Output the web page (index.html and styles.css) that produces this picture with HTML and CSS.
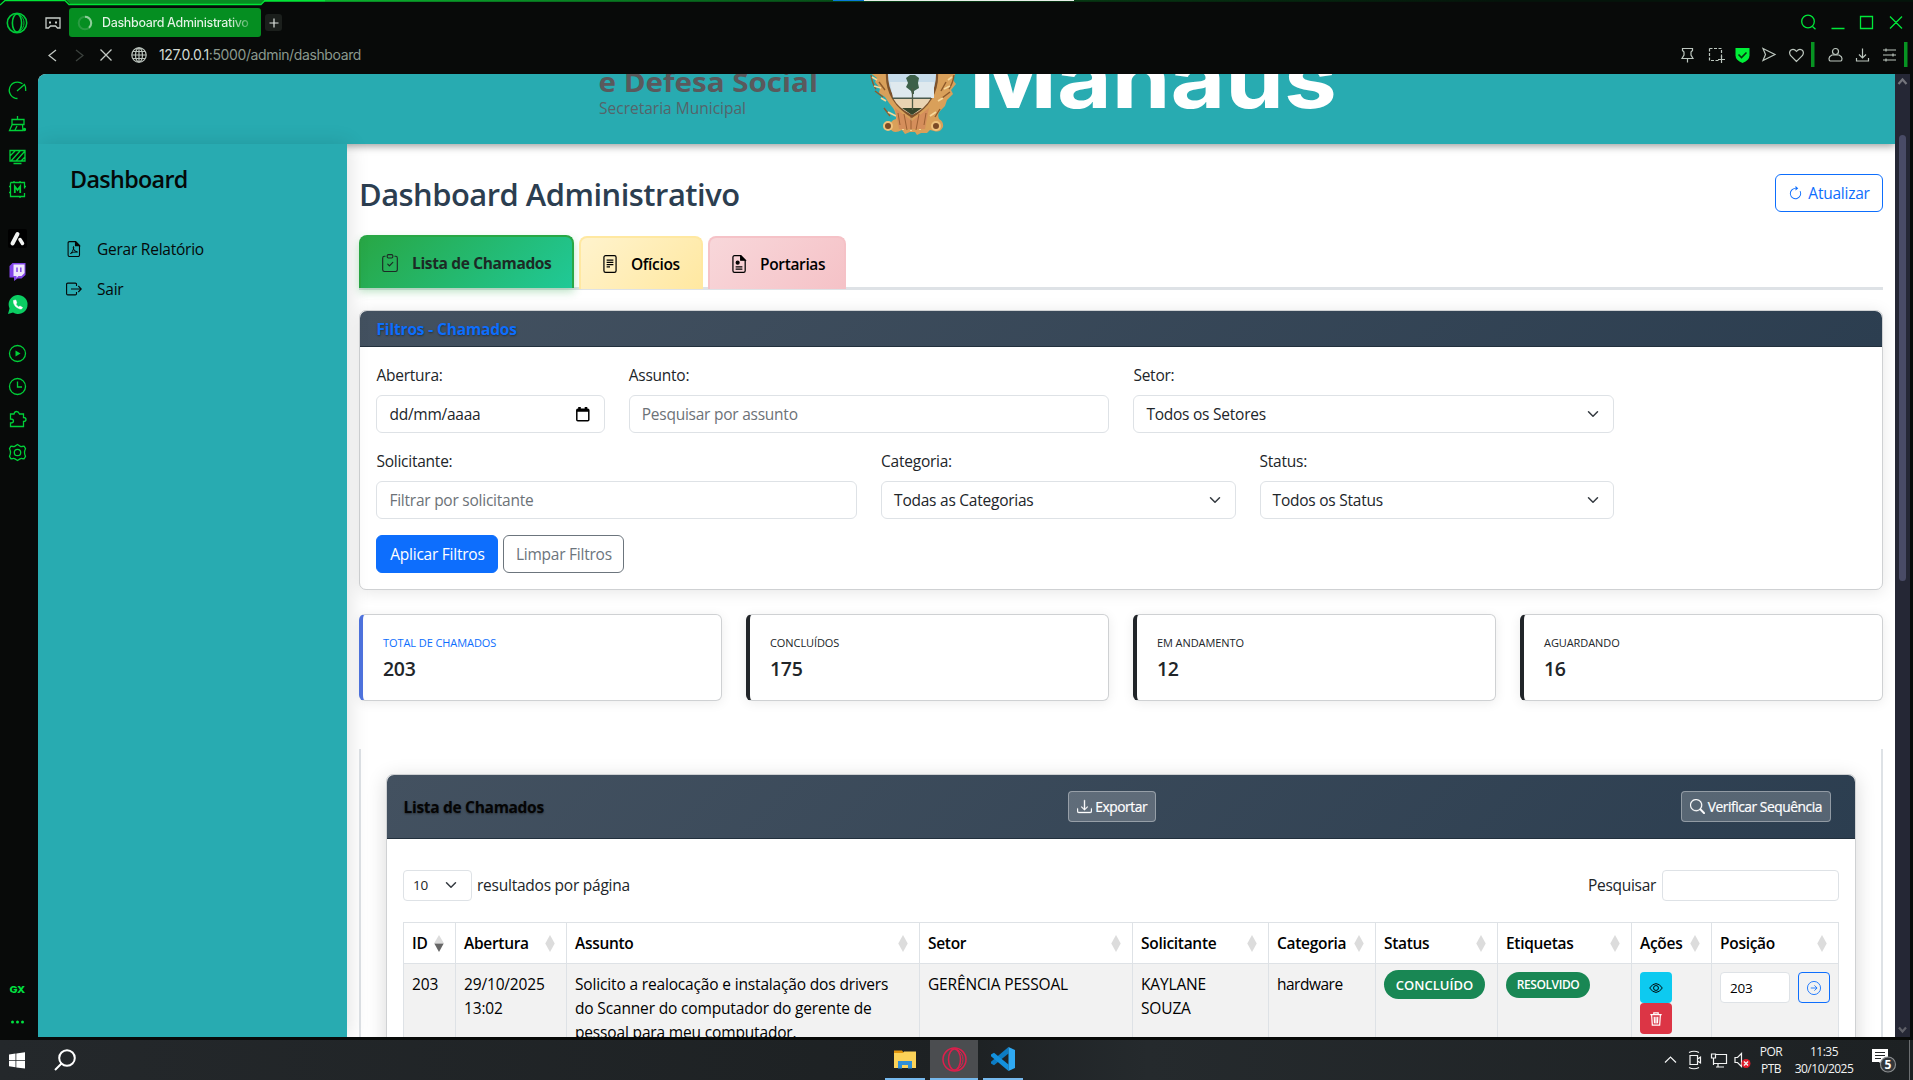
FILE: index.html
```html
<!DOCTYPE html>
<html lang="pt-BR">
<head>
<meta charset="utf-8">
<title>Dashboard Administrativo</title>
<link rel="stylesheet" href="styles.css">
</head>
<body>
<div class="screen">
  <header class="chrome">
    <svg class="topline" width="1913" height="8" viewBox="0 0 1913 8">
      <defs><linearGradient id="fade" x1="0" x2="1"><stop offset="0" stop-color="#0ac030"/><stop offset=".35" stop-color="#064d17"/><stop offset=".75" stop-color="#04140a"/></linearGradient></defs>
      <rect x="264" y="0" width="1649" height="1.800" fill="url(#fade)"/>
      <path d="M5 0h260l-4 4H70l-4-4z" fill="#078c22"/>
      <path d="M0 5l5-4.500h60l4 4h192l4-4h60" fill="none" stroke="#00e436" stroke-width="1.300"/>
      <path d="M833 0h31v1h-31z" fill="#0878d8"/><path d="M864 0h210v1H864z" fill="#e8efe9"/>
    </svg>
    <div class="tabbar">
      <svg class="opera" width="22" height="22" viewBox="0 0 22 22" fill="none" stroke="#00c838" stroke-width="1.600"><circle cx="11" cy="11" r="9.700"/><ellipse cx="11" cy="11" rx="4.600" ry="9"/><path d="M13 2.500q5 3 5 8.500t-5 8.500" stroke-width="1"/></svg>
      <svg class="pad" width="16" height="13" viewBox="0 0 16 13" fill="none" stroke="#c8cec9" stroke-width="1.300"><path d="M1 1h14v10h-2.500l-2-2h-5l-2 2H1z"/><path d="M4 5.500h2M10 5.500h2" stroke-width="2"/></svg>
      <div class="tab"><svg width="16" height="16" viewBox="0 0 16 16" fill="none" stroke-width="2"><circle cx="8" cy="8" r="6.300" stroke="#2a9c42"/><path d="M8 1.700a6.300 6.300 0 0 1 4 11" stroke="#8fce9b"/></svg><span class="tab-name">Dashboard Administrativo</span></div>
      <div class="newtab"><svg width="10" height="10" viewBox="0 0 10 10" stroke="#dfe4e0" stroke-width="1.200"><path d="M5 .5v9M.5 5h9"/></svg></div>
      <svg class="winbtns" width="104" height="20" viewBox="0 0 104 20" fill="none" stroke="#00e83a" stroke-width="1.300"><circle cx="8" cy="8.500" r="6.300"/><path d="M12.500 13.500l3 2.800M31.500 15.500h13M60.500 3.500h12v12h-12zM90 3.500l12 12m0-12l-12 12"/></svg>
    </div>
    <div class="addressbar">
      <svg width="9" height="13" viewBox="0 0 9 13" fill="none" stroke="#c3c9c4" stroke-width="1.300"><path d="M8 1L1 6.500 8 12"/></svg>
      <svg class="fwd" width="9" height="13" viewBox="0 0 9 13" fill="none" stroke="#3c423e" stroke-width="1.300"><path d="M1 1l7 5.500L1 12"/></svg>
      <svg class="stop" width="12" height="12" viewBox="0 0 12 12" stroke="#c3c9c4" stroke-width="1.300"><path d="M.5.5l11 11m0-11l-11 11"/></svg>
      <svg class="globe" width="16" height="16" viewBox="0 0 16 16" fill="none" stroke="#b9c2bb" stroke-width="1.200"><circle cx="8" cy="8" r="7.200"/><ellipse cx="8" cy="8" rx="3.500" ry="7.200"/><path d="M8 1v14M1 8h14M2 4.500h12M2 11.500h12"/></svg>
      <span class="url"><b>127.0.0.1</b>:5000/admin/dashboard</span>
      <svg class="tools" width="232" height="26" viewBox="0 0 232 26" fill="none" stroke="#bcc6be" stroke-width="1.200">
        <path d="M3.500 6.500h10v2l-1.500 1.500v3l2 3.500H3l2-3.500v-3L3.500 8.500zM8.500 16.500v4"/>
        <path d="M30.500 6.500h12v9M30.500 6.500v12h9" stroke-dasharray="3 1.500"/><path d="M42.500 14v7M39 17.500h7"/>
        <path d="M56.500 6h14v7.500q0 4.500-7 7.500-7-3-7-7.500z" fill="#00f038" stroke="none"/><path d="M59.500 12.500l3 3 5-5" stroke="#06340f" stroke-width="1.600"/>
        <path d="M84 6.500l12 6-12 6 2.500-6z"/>
        <path d="M117.500 19.500l-6-6q-2-3.500.5-5.500 3-1.500 5.500 1.300Q120 6.500 123 8q2.500 2 .5 5.500z"/>
        <path d="M132 0h3.500v25H132z" fill="#079322" stroke="none"/><path d="M225 0h3.500v25H225z" fill="#079322" stroke="none"/>
        <circle cx="156.500" cy="9.500" r="3"/><path d="M153 13h7q3 1.500 3 3.500t-1 2.500h-11q-1-.5-1-2.500t3-3.500z"/>
        <path d="M183.500 6.500v9M180 12.500l3.500 3.500 3.500-3.500M177.500 16v3h12v-3"/>
        <path d="M204 8h13M204 13h13M204 18h13M207 6.500v3M214 11.500v3M207 16.500v3"/>
      </svg>
    </div>
  </header>
  <div class="middle">
    <nav class="gx">
      <svg width="38" height="963" viewBox="0 74 38 963" fill="none" stroke="#00cf38" stroke-width="1.300">
        <path d="M17.500 98.500A8.200 8.200 0 1 1 22.500 83.800M17 91l7.500-6.500Q26.200 87 25.700 91"/>
        <path d="M17.500 116v3M12 119.500h12v5H12zM12 125l-2.500 5.500h13.500l-.5-5.500M15 130l2-4"/><circle cx="24.500" cy="129.500" r="1" fill="#00cf38"/>
        <path d="M10 150.500h15v10.500H10zM13.500 163.500h8M10 156l5-5M11 161l9-10M16 161l9-10M21 161l4-4"/>
        <path d="M10.500 182.500h14v6M24.500 193v3.500h-14v-14M9 186.500h1.500M9 192.500h1.500M14 181v1.500M20 181v1.500M20 196.500v1.500M24.500 186.500h1.500"/><path d="M14.800 193v-6.500l2.700 3.500 2.700-3.500v6.500" stroke-width="1.800"/>
        <rect x="8" y="229" width="19" height="19" rx="2" fill="#000" stroke="none"/>
        <path d="M12.500 243.500l5-9.500" stroke="#f2f4f2" stroke-width="4" stroke-linecap="round"/><path d="M20 239.500l2.500 4" stroke="#f2f4f2" stroke-width="3.500" stroke-linecap="round"/>
        <path d="M9.500 266l3-3h13v12l-4 3.500h-4l-3.500 2.500V277.500h-4.500z" fill="#8145e8" stroke="none"/><path d="M13.500 264.500h11v8.500l-3 3h-3l-2 2v-2h-3z" fill="#eee8fb" stroke="none"/><path d="M17 267.500v4.500M20.800 267.500v4.500" stroke="#8145e8" stroke-width="1.500"/>
        <path d="M8 314l1.500-5.500a9.500 9.500 0 1 1 3.500 4z" fill="#0bcd62" stroke="none"/><path d="M13.500 300.500q-.5 6 6.500 8.500 2 .5 2.500-1.500l-2.500-1.500-1.300 1Q16.300 305.500 15.800 304l1-1-1-3z" fill="#fff" stroke="#fff" stroke-width=".6"/>
        <circle cx="17.500" cy="353.500" r="8"/><path d="M15.500 350.500l5 3-5 3z" fill="#00cf38" stroke="none"/>
        <circle cx="17.500" cy="386.500" r="8"/><path d="M17.500 381.500v5.500h4.500"/>
        <path d="M10.500 414h3.500q.5-2.500 2.500-2.500T19.500 414h4v3.500q2.500 0 2.500 2t-2.500 2v5h-13v-3.500q3 0 3-2t-3-2z"/>
        <path d="M17.500 444.500l2.500 1.600q1 .6 2 .4l2-.3 1.500 2.500q-1 2-1 3.800t1 3.800l-1.500 2.500-2-.3q-1-.2-2 .4l-2.500 1.600-2.500-1.600q-1-.6-2-.4l-2 .3-1.500-2.500q1-2 1-3.800t-1-3.800l1.500-2.500 2 .3q1 .2 2-.4z" stroke-linejoin="round"/><circle cx="17.500" cy="452.500" r="3.200"/>
        <g fill="#00e040" stroke="none"><circle cx="12.500" cy="1022" r="1.500"/><circle cx="17.500" cy="1022" r="1.500"/><circle cx="22.500" cy="1022" r="1.500"/></g>
        <text x="9.500" y="993" class="gxlabel" textLength="15.500" lengthAdjust="spacingAndGlyphs">GX</text>
      </svg>
    </nav>
    <div class="page">
      <div class="banner">
        <svg width="1857" height="70" viewBox="38 74 1857 70">
          <text class="org" x="598.500" y="91.500" textLength="219.500" lengthAdjust="spacingAndGlyphs">e Defesa Social</text>
          <text class="sec" x="599" y="113.500" textLength="147" lengthAdjust="spacingAndGlyphs">Secretaria Municipal</text>
          <text class="city" x="969" y="108" textLength="368" lengthAdjust="spacingAndGlyphs">Manaus</text>
          <g>
            <path d="M869 72h87l-3 8 3 4-5 6 2 4-6 6-2 6-5 5q-3 3-1 8 5 3 4 8-3 6-9 4l-4-1-3 3h-6l-4 2-2-3h-5l-5 2-3-4q-9 5-12-2-1-7 6-9 0-7-3-11l-4-5-4-6-6-4 1-5-5-6 2-4z" fill="#d9a05a"/>
            <path d="M871 75q1 8 5 14M875 91l8 6M954 75q-1 8-5 14M950 92l-8 6M884 108l6 8M940 109l-5 8M879 82l6 8M946 82l-5 9" fill="none" stroke="#8d5a2b" stroke-width="1.400"/>
            <path d="M872 77l5 3M874 86l7 2M881 98l5 3M888 112l8 4M952 77l-4 3M950 86l-6 3M943 98l-5 3M936 112l-6 4M903 120v10M911 118v13M920 120v10" fill="none" stroke="#f6d79a" stroke-width="1.800"/>
            <path d="M895 108l17 13 17-13-4 21h-26z" fill="#d58e5b"/>
            <path d="M904 114l3 16M911 117v13M919 114l-3 16M898 113l2 12M926 113l-2 12" stroke="#9c6033" stroke-width="1"/>
            <circle cx="888" cy="126" r="4" fill="#7a4a26" stroke="#efc27c" stroke-width="2"/><circle cx="936" cy="126" r="4" fill="#7a4a26" stroke="#efc27c" stroke-width="2"/>
            <path d="M886 72h52q2 29-26 46Q884 101 886 72z" fill="#7d522c"/>
            <path d="M888 72h48q1 27-24 43-25-16-24-43z" fill="#c5dbea"/>
            <path d="M890 82h44v16h-41z" fill="#dfe9ee"/>
            <path d="M893 98h38q-6 11-19 17-14-7-19-17z" fill="#e9d3b2"/>
            <path d="M892 97.500h39v1.500h-38z" fill="#4a5a4c"/>
            <path d="M902 108h20l-10 7z" fill="#36452b"/>
            <path d="M906 78l4-3 5 0 4 3-1 5 1 5-5 3 0 3h-2l-1-3-5-4 2-4z" fill="#3c6049"/><path d="M912.500 88v22" stroke="#4d5a45" stroke-width="1.300"/>
          </g>
        </svg>
      </div>
      <div class="columns">
        <aside class="side">
          <div class="side-title">Dashboard</div>
          <a class="side-link"><svg width="16" height="16" viewBox="0 0 16 16" fill="none" stroke="currentColor" stroke-width="1.100"><path d="M3.500.600h6L13.500 4.600v9.500q0 1.400-1.400 1.400H3.500q-1.400 0-1.400-1.400V2Q2.100.600 3.500.600z"/><path d="M9.500.600v4h4z" fill="currentColor"/><path d="M4.500 12.500q2-1.500 3-4.500.5-2.500 0-2.500t0 2.500q1 2.500 4 3-4-.5-7 1.500z" stroke-width="1"/></svg><span>Gerar Relatório</span></a>
          <a class="side-link"><svg width="16" height="16" viewBox="0 0 16 16" fill="none" stroke="currentColor" stroke-width="1.100"><path d="M10.500 5V3.300q0-1.200-1.200-1.200H1.800Q.6 2.100.6 3.300v9.400q0 1.200 1.200 1.200h7.500q1.200 0 1.200-1.200V11M5 8h10.300M12.300 5l3 3-3 3"/></svg><span>Sair</span></a>
        </aside>
        <main class="main">
          <div class="title-row">
            <h1>Dashboard Administrativo</h1>
            <a class="btn refresh"><svg width="15" height="15" viewBox="0 0 16 16" fill="currentColor"><path d="M8 3a5 5 0 1 0 4.546 2.914.5.5 0 0 1 .908-.417A6 6 0 1 1 8 2z"/><path d="M8 4.466V.534a.25.25 0 0 1 .41-.192l2.360 1.966c.12.1.12.284 0 .384L8.410 4.658A.25.25 0 0 1 8 4.466"/></svg><span>Atualizar</span></a>
          </div>
          <div class="tabs">
            <a class="nav-tab green"><svg width="18" height="18" viewBox="0 0 16 16" fill="currentColor"><path d="M10.854 7.146a.5.5 0 0 1 0 .708l-3 3a.5.5 0 0 1-.708 0l-1.500-1.500a.5.5 0 1 1 .708-.708L7.500 9.793l2.646-2.647a.5.5 0 0 1 .708 0"/><path d="M4 1.500H3a2 2 0 0 0-2 2V14a2 2 0 0 0 2 2h10a2 2 0 0 0 2-2V3.500a2 2 0 0 0-2-2h-1v1h1a1 1 0 0 1 1 1V14a1 1 0 0 1-1 1H3a1 1 0 0 1-1-1V3.500a1 1 0 0 1 1-1h1z"/><path d="M9.500 1a.5.5 0 0 1 .5.5v1a.5.5 0 0 1-.5.5h-3a.5.5 0 0 1-.5-.5v-1a.5.5 0 0 1 .5-.5zm-3-1A1.500 1.500 0 0 0 5 1.500v1A1.500 1.500 0 0 0 6.500 4h3A1.500 1.500 0 0 0 11 2.500v-1A1.500 1.500 0 0 0 9.500 0z"/></svg><span>Lista de Chamados</span></a>
            <a class="nav-tab yellow"><svg width="18" height="18" viewBox="0 0 16 16" fill="none" stroke="currentColor" stroke-width="1.100"><rect x="2.600" y=".600" width="10.800" height="14.800" rx="1.500"/><path d="M5 4.500h6M5 6.500h6M5 8.500h6M5 10.500h3"/></svg><span>Ofícios</span></a>
            <a class="nav-tab red"><svg width="18" height="18" viewBox="0 0 16 16" fill="none" stroke="currentColor" stroke-width="1.100"><path d="M4 .600h5.500l4 4v9.400q0 1.400-1.400 1.400H4q-1.400 0-1.400-1.400V2Q2.600.600 4 .600z"/><path d="M9.500.600v4h4z" fill="currentColor"/><circle cx="6.800" cy="6.800" r="1.300" fill="currentColor"/><path d="M5 10.500h6M5 12.500h6"/></svg><span>Portarias</span></a>
          </div>
          <section class="card filters">
            <div class="card-head"><span>Filtros - Chamados</span></div>
            <div class="filter-body">
              <div class="frow">
                <div class="field c2"><label>Abertura:</label><div class="input">
                  <span>dd/mm/aaaa</span><svg width="14" height="15" viewBox="0 0 14 15" fill="none" stroke="#000" stroke-width="1.500"><rect x=".8" y="2.300" width="12" height="11.500" rx="1"/><path d="M1 3.500h12M3.500 0v2.500M10 0v2.500" stroke-width="2.600"/></svg></div></div>
                <div class="field c4"><label>Assunto:</label><div class="input ph"><span>Pesquisar por assunto</span></div></div>
                <div class="field c4"><label>Setor:</label><div class="input"><span>Todos os Setores</span><svg class="chev" viewBox="0 0 16 16"><path d="M2 5l6 6 6-6"/></svg></div></div>
              </div>
              <div class="frow">
                <div class="field c4"><label>Solicitante:</label><div class="input ph"><span>Filtrar por solicitante</span></div></div>
                <div class="field c3"><label>Categoria:</label><div class="input"><span>Todas as Categorias</span><svg class="chev" viewBox="0 0 16 16"><path d="M2 5l6 6 6-6"/></svg></div></div>
                <div class="field c3"><label>Status:</label><div class="input"><span>Todos os Status</span><svg class="chev" viewBox="0 0 16 16"><path d="M2 5l6 6 6-6"/></svg></div></div>
              </div>
              <div class="buttons"><a class="btn apply"><span>Aplicar Filtros</span></a><a class="btn clear"><span>Limpar Filtros</span></a></div>
            </div>
          </section>
          <section class="stats">
            <div class="stat blue"><small>TOTAL DE CHAMADOS</small><strong>203</strong></div>
            <div class="stat"><small>CONCLUÍDOS</small><strong>175</strong></div>
            <div class="stat"><small>EM ANDAMENTO</small><strong>12</strong></div>
            <div class="stat"><small>AGUARDANDO</small><strong>16</strong></div>
          </section>
          <section class="pane">
            <div class="card list">
              <div class="card-head tall">
                <span>Lista de Chamados</span>
                <a class="glass"><svg width="15" height="15" viewBox="0 0 16 16" fill="currentColor" stroke="currentColor" stroke-width=".4"><path d="M.5 9.900a.5.5 0 0 1 .5.5v2.500a1 1 0 0 0 1 1h12a1 1 0 0 0 1-1v-2.500a.5.5 0 0 1 1 0v2.500a2 2 0 0 1-2 2H2a2 2 0 0 1-2-2v-2.500a.5.5 0 0 1 .5-.5"/><path d="M7.646 11.854a.5.5 0 0 0 .708 0l3-3a.5.5 0 0 0-.708-.708L8.500 10.293V1.500a.5.5 0 0 0-1 0v8.793L5.354 8.146a.5.5 0 1 0-.708.708z"/></svg><span>Exportar</span></a>
                <a class="glass"><svg width="15" height="15" viewBox="0 0 16 16" fill="currentColor" stroke="currentColor" stroke-width=".3"><path d="M11.742 10.344a6.500 6.500 0 1 0-1.397 1.398l.097.115 3.850 3.850a1 1 0 0 0 1.415-1.414l-3.850-3.850a1 1 0 0 0-.115-.1M12 6.500a5.500 5.500 0 1 1-11 0 5.500 5.500 0 0 1 11 0"/></svg><span>Verificar Sequência</span></a>
              </div>
              <div class="list-tools">
                <div class="len"><div class="small-input"><span>10</span><svg class="chev" viewBox="0 0 16 16"><path d="M2 5l6 6 6-6"/></svg></div><span>resultados por página</span></div>
                <div class="find"><span>Pesquisar</span><div class="small-input wide"></div></div>
              </div>
              <div class="grid">
                <div class="th"><span>ID</span><svg class="sort desc" viewBox="0 0 10 18"><path d="M5 0l5 8.500H0z"/><path d="M5 18L0 9h10z"/></svg></div>
                <div class="th"><span>Abertura</span><svg class="sort" viewBox="0 0 10 18"><path d="M5 0l5 9-5 9-5-9z"/></svg></div>
                <div class="th"><span>Assunto</span><svg class="sort" viewBox="0 0 10 18"><path d="M5 0l5 9-5 9-5-9z"/></svg></div>
                <div class="th"><span>Setor</span><svg class="sort" viewBox="0 0 10 18"><path d="M5 0l5 9-5 9-5-9z"/></svg></div>
                <div class="th"><span>Solicitante</span><svg class="sort" viewBox="0 0 10 18"><path d="M5 0l5 9-5 9-5-9z"/></svg></div>
                <div class="th"><span>Categoria</span><svg class="sort" viewBox="0 0 10 18"><path d="M5 0l5 9-5 9-5-9z"/></svg></div>
                <div class="th"><span>Status</span><svg class="sort" viewBox="0 0 10 18"><path d="M5 0l5 9-5 9-5-9z"/></svg></div>
                <div class="th"><span>Etiquetas</span><svg class="sort" viewBox="0 0 10 18"><path d="M5 0l5 9-5 9-5-9z"/></svg></div>
                <div class="th"><span>Ações</span><svg class="sort" viewBox="0 0 10 18"><path d="M5 0l5 9-5 9-5-9z"/></svg></div>
                <div class="th"><span>Posição</span><svg class="sort" viewBox="0 0 10 18"><path d="M5 0l5 9-5 9-5-9z"/></svg></div>
                <div class="td">203</div>
                <div class="td">29/10/2025<br>13:02</div>
                <div class="td">Solicito a realocação e instalação dos drivers<br>do Scanner do computador do gerente de<br>pessoal para meu computador.</div>
                <div class="td">GERÊNCIA PESSOAL</div>
                <div class="td">KAYLANE<br>SOUZA</div>
                <div class="td kind">hardware</div>
                <div class="td top6"><div class="badge big">CONCLUÍDO</div></div>
                <div class="td"><div class="badge">RESOLVIDO</div></div>
                <div class="td"><div class="act view"><svg width="14" height="14" viewBox="0 0 16 16" fill="none" stroke="currentColor" stroke-width="1.100"><path d="M.8 8Q4 3 8 3t7.200 5Q12 13 8 13T.8 8z"/><circle cx="8" cy="8" r="2.800"/></svg></div><div class="act del"><svg width="14" height="14" viewBox="0 0 16 16" fill="none" stroke="currentColor" stroke-width="1.400"><path d="M1.500 3h13M5.500 2.500V1h5v1.500M3 3.500l.8 11.500h8.400L13 3.500M6 5.500l.3 7.500M8 5.500V13M10 5.500L9.700 13"/></svg></div></div>
                <div class="td pos"><div class="small-input num">203</div><div class="go"><svg width="14" height="14" viewBox="0 0 16 16" fill="none" stroke="currentColor" stroke-width="1"><circle cx="8" cy="8" r="7.500"/><path d="M4.300 8h7.200M8.500 5l3 3-3 3"/></svg></div></div>
              </div>
            </div>
          </section>
        </main>
      </div>
    </div>
    <div class="scroll">
      <svg width="15" height="963" viewBox="0 0 15 963"><path d="M3.500 10L7.500 5.500l4 4.500" fill="none" stroke="#74757c" stroke-width="2.200"/><rect x="4" y="61" width="7" height="446" rx="3.500" fill="#494b66"/><path d="M4 953.500l3.500 4 3.500-4" fill="none" stroke="#5f6068" stroke-width="2.200"/></svg>
    </div>
  </div>
  <footer class="taskbar">
    <svg class="win" width="16" height="17" viewBox="0 0 16 17" fill="#fff"><path d="M0 2.500l6.500-1V8H0zM7.300 1.400L16 .2V8H7.300zM0 8.800h6.500v6.400L0 14.300zM7.300 8.800H16v7.800l-8.700-1.200z"/></svg>
    <svg class="lens" width="23" height="23" viewBox="0 0 23 23" fill="none" stroke="#fff" stroke-width="2"><circle cx="13" cy="9" r="7.800"/><path d="M7.500 14.500L1 21"/></svg>
    <div class="apps">
      <div class="app"><svg width="22" height="20" viewBox="0 0 22 20"><path d="M0 1.500h8l2 2.500H0z" fill="#e0940c"/><path d="M0 4h9l1-1.500h12V19H0z" fill="#fbd258"/><path d="M4 19.500V12h14v7.500h-4V16H8v3.500z" fill="#2f8fd8"/></svg></div>
      <div class="app active"><svg width="25" height="25" viewBox="0 0 25 25" fill="none" stroke="#dd1f4c" stroke-width="1.500"><circle cx="12.500" cy="12.500" r="11.500"/><ellipse cx="12.500" cy="12.500" rx="6" ry="10.500"/><path d="M15 2.500q6 3.500 6 10t-6 10" stroke-width="1"/></svg></div>
      <div class="app"><svg width="24" height="24" viewBox="0 0 24 24"><path d="M17.500 0v6.500L3 18.200 0 16.500v-1.800z" fill="#0d7cc4"/><path d="M17.500 24v-6.500L3 5.800 0 7.500v1.800z" fill="#1390dc"/><path d="M17.500 0L24 3v18l-6.500 3z" fill="#2fa9f3"/></svg></div>
    </div>
    <svg class="tray" width="90" height="24" viewBox="0 0 90 24" fill="none" stroke="#f2f3f3" stroke-width="1.200">
      <path d="M1 14.500L6.500 9l5.500 5.500M26 7.500h7.500v9H26zM33.500 11l3-2v6l-3-2M25 4.500q5-2.500 10 0M25 19.500q5 2.500 10 0"/>
      <path d="M51 6.500h11.500v9H49.500V12M54 15.500v3.500M52 19h8M47.500 6h4v4h-4zM49.500 10v7"/>
      <path d="M71 9.500h2.500l4-4v13l-4-4H71z"/><circle cx="82" cy="15.500" r="4.500" fill="#e01b2b" stroke="none"/><path d="M80 13.500l4 4m0-4l-4 4" stroke-width="1.400"/></svg>
    <div class="tcol lang"><span>POR</span><span>PTB</span></div>
    <div class="tcol clock"><span>11:35</span><span>30/10/2025</span></div>
    <svg class="notes" width="27" height="27" viewBox="0 0 27 27"><path d="M1 1h16v13h-5v4l-4-4H1z" fill="#fff"/><path d="M4 4.500h10M4 7.500h10M4 10.500h6" stroke="#23272a"/><circle cx="17" cy="16.500" r="7.500" fill="#34373a" stroke="#8b8e90" stroke-width="1.200"/><text x="17" y="21" text-anchor="middle" class="five">5</text></svg>
    <i class="edge"></i>
  </footer>
</div>
</body>
</html>
```
FILE: styles.css
```css
* { box-sizing: border-box; }
body { margin: 0; background: #080a09; color: #212529; font-family: "Open Sans", "Noto Sans", sans-serif; font-size: 15.5px; line-height: 24px; letter-spacing: -0.24px; }
svg { display: block; flex: none; }
.screen { width: 1913px; height: 1080px; display: flex; flex-direction: column; overflow: hidden; }

/* browser chrome */
.chrome { height: 74px; flex: none; background: #080a09; }
.topline { height: 8px; }
.tabbar { display: flex; height: 29px; align-items: center; padding-left: 6px; }
.opera { width: 22px; }
.pad { margin: 2px 0 0 17px; }
.tab { display: flex; align-items: center; width: 192px; height: 29px; margin-left: 8px; padding-left: 8px; background: #058e21; border-radius: 3px; gap: 9px; }
.tab-name { font: 500 12.5px/18px Inter, sans-serif; letter-spacing: -0.34px; white-space: nowrap; background: linear-gradient(90deg, #e6f4e8 86%, #4fae60); -webkit-background-clip: text; color: transparent; }
.newtab { width: 17px; height: 17px; margin-left: 4px; border-radius: 3px; background: #1b1f1c; display: flex; align-items: center; justify-content: center; }
.winbtns { margin: 0 9px 0 auto; }
.addressbar { display: flex; align-items: center; height: 36px; padding-left: 48px; }
.fwd { margin-left: 18px; }
.stop { margin-left: 16px; }
.globe { margin: 0 12px 0 19px; }
.url { font: 400 14px/20px Inter, sans-serif; letter-spacing: -0.38px; color: #8b998e; }
.url b { font-weight: 400; color: #d2dbd4; }
.tools { margin: 0 2px 0 auto; }
.middle { display: flex; height: 966px; flex: none; padding: 0 3px 3px 0; }
.gx { width: 38px; flex: none; }
.gxlabel { font: 800 9.5px Inter, sans-serif; fill: #00e040; stroke: none; }
.scroll { width: 15px; background: #252735; }

/* page */
.page { width: 1857px; height: 963px; overflow: hidden; background: #fff; border-top-left-radius: 8px; }
.banner { height: 70px; background: #28abb1; box-shadow: 0 2px 8px rgba(0,0,0,.4); }
.org { font: 700 26px "Open Sans", sans-serif; fill: #5a595c; letter-spacing: 0; }
.sec { font: 400 15.5px "Open Sans", sans-serif; fill: #55646a; letter-spacing: 0; }
.city { font: 700 82px Inter, sans-serif; fill: #fff; letter-spacing: 0; }
.columns { display: flex; height: 893px; }
.side { width: 309px; flex: none; position: relative; background: #28abb1; color: #050808; padding: 18px 28px; box-shadow: 2px 0 20px rgba(0,0,0,.12); }
.side-title { font-size: 23.3px; font-weight: 600; line-height: 34px; letter-spacing: -.65px; padding-left: 4px; margin-bottom: 33px; }
.side-link { display: flex; align-items: center; height: 40px; gap: 15px; }
.main { width: 1548px; flex: none; padding: 0 12px; }
.title-row { display: flex; justify-content: space-between; padding-top: 30px; height: 91px; }
h1 { margin: 0; font-size: 30.9px; font-weight: 600; line-height: 40px; color: #2c3e50; letter-spacing: -.5px; }
.btn { display: flex; align-items: center; justify-content: center; height: 38px; border-radius: 6px; border: 1px solid; }
.refresh { width: 108px; color: #0d6efd; gap: 5px; }
.tabs { display: flex; height: 55px; border-bottom: 3px solid #dee2e6; gap: 5px; margin-bottom: 20px; }
.nav-tab { display: flex; align-items: center; height: 53px; margin-top: 1px; padding: 1px 0 0 20px; gap: 12px; border-radius: 8px 8px 0 0; border: 2px solid; border-bottom: 0; font-weight: 600; letter-spacing: -.35px; }
.nav-tab span, .nav-tab svg { color: #000; }
.nav-tab.green { width: 215px; margin-top: 0; gap: 13px; background: linear-gradient(135deg, #28a745, #20c997); border-color: #28a745; box-shadow: 0 4px 8px rgba(40,167,69,.3); font-weight: 700; }
.green span, .green svg { color: #1c2a25; }
.yellow { width: 124px; background: linear-gradient(135deg, #fff3cd, #ffe8a1); border-color: #ffe8a1; }
.red { width: 138px; background: linear-gradient(135deg, #f8d7da, #f5c2c7); border-color: #f5c2c7; }
.card { border: 1px solid #cfd1d3; border-radius: 7px; background: #fff; box-shadow: 0 2px 16px rgba(0,0,0,.1); }
.filters { height: 280px; }
.card-head { height: 36px; padding: 0 16.5px; display: flex; align-items: center; background: linear-gradient(135deg, #435160, #2c3e50); border-bottom: 1px solid #22303d; border-radius: 7px 7px 0 0; font-weight: 700; letter-spacing: -.16px; color: #0d6efd; text-shadow: 0 1px 2px rgba(0,0,0,.4); }
.filter-body { padding: 16px 16.4px; }
.frow { display: flex; gap: 24px; height: 86px; }
.c2 { width: 228.3px; }
.c3 { width: 354.5px; }
.c4 { width: 480.7px; }
label { display: block; height: 24px; margin-bottom: 8px; }
.input { height: 38px; border: 1px solid #dee2e6; border-radius: 6px; padding: 0 14px 0 12px; display: flex; align-items: center; justify-content: space-between; }
.ph { color: #6c7277; }
.chev { width: 12px; height: 12px; fill: none; stroke: #343a40; stroke-width: 2; stroke-linecap: round; stroke-linejoin: round; }
.buttons { display: flex; gap: 5px; }
.apply { width: 122px; background: #0d6efd; color: #fff; border-color: #0d6efd; }
.clear { width: 121px; color: #6c757d; }
.stats { display: grid; grid-template-columns: repeat(4, 363px); justify-content: space-between; margin-top: 24px; }
.stat { height: 87px; border: 1px solid #cfd1d3; border-left: 4px solid #212529; border-radius: 6px; padding: 19px 20px; box-shadow: 0 2px 12px rgba(0,0,0,.08); display: flex; flex-direction: column; background: #fff; }
.stat small { font-size: 11px; line-height: 17px; letter-spacing: -.08px; }
.stat strong { font-size: 19.5px; line-height: 24px; margin-top: 6px; font-weight: 600; letter-spacing: -.3px; }
.stat.blue { border-left-color: #4e73df; }
.stat.blue small { color: #0d6efd; }
.pane { margin-top: 48px; height: 400px; border: 2px solid #dee2e6; border-top: 0; padding: 25px 25px 0; }
.list { height: 500px; box-shadow: 0 4px 20px rgba(0,0,0,.16); }
.tall { height: 64px; color: #050505; justify-content: space-between; padding-right: 24px; letter-spacing: -.3px; }
.glass { display: flex; align-items: center; height: 31px; padding: 0 8px; gap: 3px; border: 1px solid rgba(255,255,255,.35); border-radius: 4px; background: rgba(255,255,255,.2); color: #fff; font-size: 13.8px; letter-spacing: -.45px; text-shadow: none; -webkit-text-stroke: .2px #fff; font-weight: 400; }
.list-tools { display: flex; justify-content: space-between; padding: 31px 16px 0; height: 83px; }
.len, .find { display: flex; height: 30px; align-items: center; gap: 5px; }
.find { gap: 6px; letter-spacing: -.3px; }
.small-input { width: 69px; height: 31px; flex: none; border: 1px solid #dee2e6; border-radius: 4px; display: flex; align-items: center; justify-content: space-between; padding: 0 14px 0 9px; font-size: 13.5px; background: #fff; }
.wide { width: 177px; }
.num { width: 70px; }
.grid { display: grid; grid-template-columns: 52px 111px 353px 213px 136px 107px 122px 134px 80px 127px; margin-left: 16px; width: 1436px; grid-template-rows: 41px 130px; border-top: 1px solid #dee2e6; border-left: 1px solid #dee2e6; color: #000; }
.th { border-right: 1px solid #dee2e6; border-bottom: 1px solid #dee2e6; display: flex; justify-content: space-between; align-items: center; padding: 0 11px 0 8px; font-weight: 600; letter-spacing: -.3px; }
.sort { width: 10px; height: 17px; fill: #dcdcdc; }
.desc path + path { fill: #666; }
.td { border-right: 1px solid #dee2e6; background: #f2f2f2; padding: 8px; white-space: nowrap; letter-spacing: -.16px; }
.kind { letter-spacing: -.5px; }
.top6 { padding-top: 6px; }
.badge { width: 84px; height: 26px; border-radius: 13px; background: #198754; color: #fff; font-size: 12px; font-weight: 600; letter-spacing: -.4px; display: flex; align-items: center; justify-content: center; }
.big { width: 101px; height: 29px; border-radius: 15px; font-size: 13px; letter-spacing: 0; }
.act { width: 32px; height: 31px; border-radius: 4px; display: flex; align-items: center; justify-content: center; }
.view { background: #0dcaf0; color: #000; }
.del { background: #dc3545; color: #fff; }
.pos { display: flex; gap: 8px; }
.go { width: 32px; height: 31px; border: 1px solid #0d6efd; border-radius: 4px; color: #0d6efd; display: flex; align-items: center; justify-content: center; }

/* taskbar */
.taskbar { height: 40px; flex: none; background: linear-gradient(90deg, #24282b, #1d2123 50%, #252a2d 60%, #1d2123); display: flex; align-items: center; color: #f2f3f3; }
.win { margin-left: 9px; }
.lens { margin-left: 29px; }
.apps { display: flex; height: 40px; margin-left: 808px; }
.app { width: 40px; height: 40px; display: flex; align-items: center; justify-content: center; border-bottom: 2px solid #76b9ed; }
.active { width: 48px; margin: 0 5px; background: #4b4d50; }
.tray { margin-left: auto; }
.tcol { display: flex; flex-direction: column; align-items: center; font-size: 12px; line-height: 17px; letter-spacing: -.5px; }
.lang { width: 24px; margin-left: 5px; }
.clock { width: 60px; margin-left: 11px; }
.notes { margin: 3px 11px 0 17px; }
.five { font: 700 12px "Open Sans", sans-serif; fill: #fff; letter-spacing: 0; }
.edge { width: 1px; height: 40px; background: #6b6e70; margin-right: 3px; }
```
